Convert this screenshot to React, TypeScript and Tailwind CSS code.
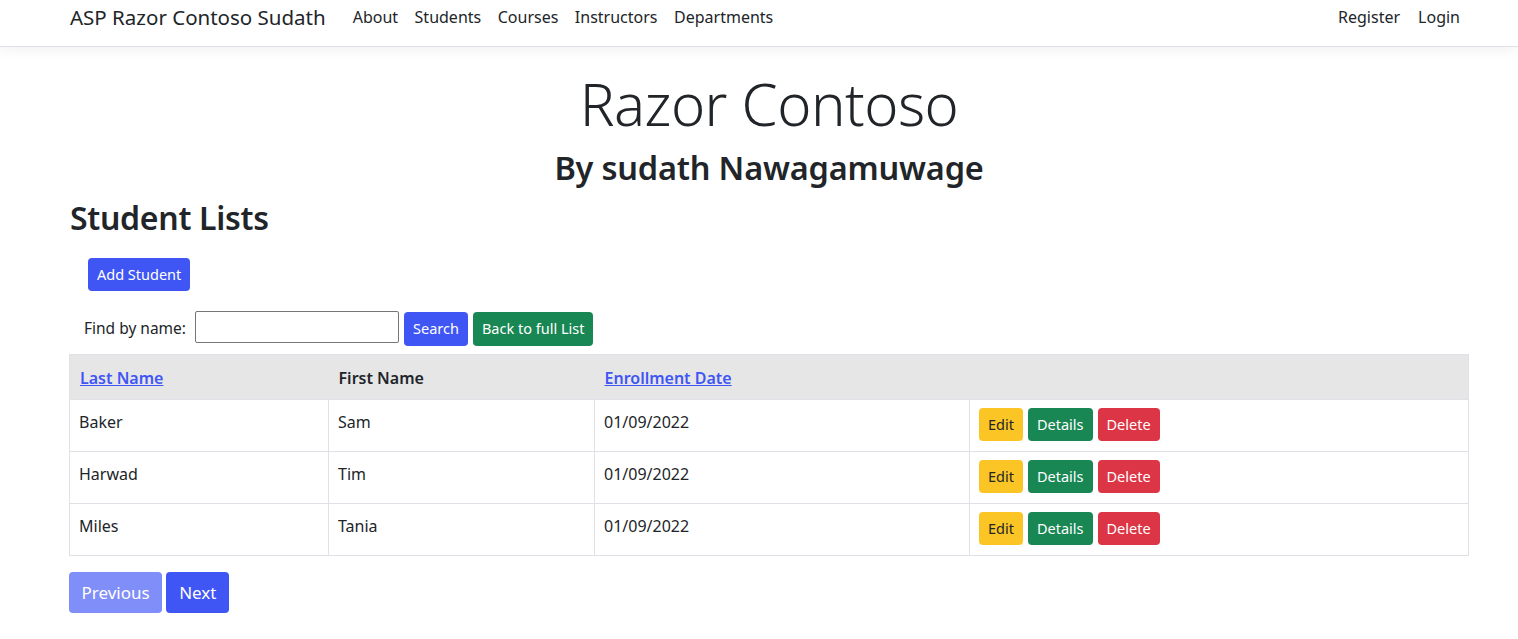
import React from "react";

const rows = [
  { last: "Baker", first: "Sam", date: "01/09/2022" },
  { last: "Harwad", first: "Tim", date: "01/09/2022" },
  { last: "Miles", first: "Tania", date: "01/09/2022" },
];

export default function App() {
  return (
    <div className="min-h-[639px] bg-white text-[#212529]" style={{ fontFamily: '"Noto Sans", "Open Sans", sans-serif' }}>
      <nav className="h-[47px] border-b border-[#dee2e6] shadow-[0_4px_12px_rgba(0,0,0,0.05)] bg-white">
        <div className="ml-[70px] mr-[58px] flex h-[34px] items-center">
          <span className="text-[20.5px] mr-[27px]">ASP Razor Contoso Sudath</span>
          <div className="flex gap-[16.5px] text-[16px]">
            <span>About</span>
            <span>Students</span>
            <span>Courses</span>
            <span>Instructors</span>
            <span>Departments</span>
          </div>
          <div className="ml-auto flex gap-[18px] text-[16px]">
            <span>Register</span>
            <span>Login</span>
          </div>
        </div>
      </nav>
      <main className="mx-[69px] w-[1400px]">
        <h1 className="mt-[24px] text-center text-[58px] font-light leading-[66px] tracking-[-0.5px]">Razor Contoso</h1>
        <h2 className="text-center text-[32.5px] font-semibold leading-[38px] mt-[12px] tracking-[-0.2px]">By sudath Nawagamuwage</h2>
        <h2 className="ml-[1px] text-[32px] font-semibold leading-[38px] mt-[12px] tracking-[-0.3px]">Student Lists</h2>
        <div className="mt-[21px] ml-[19px]">
          <button className="h-[33px] rounded-[4px] bg-[#3f56f5] px-[9px] text-[14.5px] text-white">Add Student</button>
        </div>
        <div className="mt-[17px] ml-[15px] flex items-center gap-[5px]">
          <span className="text-[15.5px] mr-[4px] mt-[3px]">Find by name:</span>
          <input className="h-[32px] w-[204px] rounded-[2px] border border-[#767676]" />
          <button className="h-[34px] mt-[4px] rounded-[4px] bg-[#3f56f5] px-[9px] text-[14.5px] text-white">Search</button>
          <button className="h-[34px] mt-[4px] rounded-[4px] bg-[#198754] px-[9px] text-[14.5px] text-white">Back to full List</button>
        </div>
        <table className="mt-[8px] w-full border-collapse border border-[#dee2e6] text-[16px]">
          <thead>
            <tr className="h-[45px] bg-[#e6e6e6]">
              <th className="w-[259px] px-[10px] pt-[2px] text-left font-semibold">
                <a className="text-[#3f56f5] underline">Last Name</a>
              </th>
              <th className="w-[266px] px-[10px] pt-[2px] text-left font-semibold">First Name</th>
              <th className="w-[375px] px-[10px] pt-[2px] text-left font-semibold">
                <a className="text-[#3f56f5] underline">Enrollment Date</a>
              </th>
              <th></th>
            </tr>
          </thead>
          <tbody>
            {rows.map((r) => (
              <tr key={r.last} className="h-[52px] border-t border-[#dee2e6]">
                <td className="border-r border-[#dee2e6] px-[9px] align-top pt-[10px]">{r.last}</td>
                <td className="border-r border-[#dee2e6] px-[9px] align-top pt-[10px]">{r.first}</td>
                <td className="border-r border-[#dee2e6] px-[9px] align-top pt-[10px]">{r.date}</td>
                <td className="px-[9px] align-top pt-[8px]">
                  <div className="flex gap-[5px]">
                    <button className="h-[33px] rounded-[4px] bg-[#fbc526] px-[9px] text-[14.5px] text-[#212529]">Edit</button>
                    <button className="h-[33px] rounded-[4px] bg-[#198754] px-[9px] text-[14.5px] text-white">Details</button>
                    <button className="h-[33px] rounded-[4px] bg-[#dc3545] px-[9px] text-[14.5px] text-white">Delete</button>
                  </div>
                </td>
              </tr>
            ))}
          </tbody>
        </table>
        <div className="mt-[16px] flex gap-[4px]">
          <button className="h-[41px] rounded-[4px] bg-[#7f8ef8] px-[12.5px] text-[17px] text-white">Previous</button>
          <button className="h-[41px] rounded-[4px] bg-[#3f56f5] px-[13px] text-[17px] text-white">Next</button>
        </div>
      </main>
    </div>
  );
}
